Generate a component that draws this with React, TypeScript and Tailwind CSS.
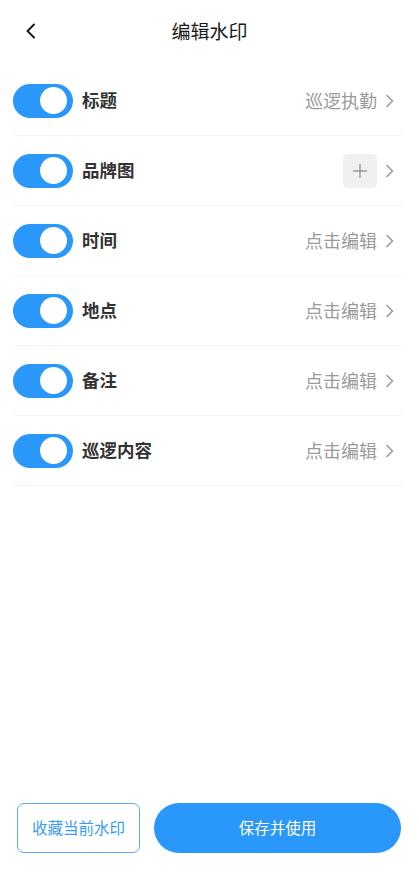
import React from "react";

const font = { fontFamily: '"Noto Sans CJK SC", "Noto Sans", sans-serif' };

function Toggle() {
  return (
    <div className="w-[60px] h-[34px] rounded-full bg-[#2a97fa] flex items-center justify-end pr-[6px] shrink-0">
      <div className="w-[27px] h-[27px] rounded-full bg-white" />
    </div>
  );
}

function Chevron() {
  return (
    <svg width="10" height="14" viewBox="0 0 10 14" className="shrink-0 ml-[8px]">
      <path d="M2 1.5 L7.5 7 L2 12.5" fill="none" stroke="#9a9a9a" strokeWidth="1.6" strokeLinecap="round" strokeLinejoin="round" />
    </svg>
  );
}

type Row = { label: string; value?: string; plus?: boolean };

const rows: Row[] = [
  { label: "标题", value: "巡逻执勤" },
  { label: "品牌图", plus: true },
  { label: "时间", value: "点击编辑" },
  { label: "地点", value: "点击编辑" },
  { label: "备注", value: "点击编辑" },
  { label: "巡逻内容", value: "点击编辑" },
];

export default function App() {
  return (
    <div className="h-screen w-full bg-white flex flex-col" style={font}>
      <div className="relative h-[62px] flex items-center justify-center">
        <svg width="12" height="16" viewBox="0 0 12 16" className="absolute left-[25px] top-[23px]">
          <path d="M9 1.5 L2.5 8 L9 14.5" fill="none" stroke="#1a1a1a" strokeWidth="2" strokeLinecap="round" strokeLinejoin="round" />
        </svg>
        <div className="text-[19px] text-[#1a1a1a] font-normal">编辑水印</div>
      </div>
      <div className="pt-[4px] flex-1">
        {rows.map((r) => (
          <div key={r.label} className="ml-[13px] mr-[16px] pr-[8px] h-[70px] flex items-center border-b border-[#f5f5f5]">
            <Toggle />
            <div className="ml-[9px] text-[17.5px] font-semibold text-[#333333] flex-1">{r.label}</div>
            {r.plus ? (
              <div className="w-[34px] h-[34px] rounded-[5px] bg-[#f0f0f0] flex items-center justify-center">
                <svg width="16" height="16" viewBox="0 0 16 16">
                  <path d="M8 1 V15 M1 8 H15" stroke="#9a9a9a" strokeWidth="1.4" />
                </svg>
              </div>
            ) : (
              <div className="text-[18px] text-[#9a9a9a]">{r.value}</div>
            )}
            <Chevron />
          </div>
        ))}
      </div>
      <div className="flex gap-[14px] px-[17px] pb-[33px] pr-[18px]">
        <button className="w-[123px] h-[50px] rounded-[7px] border border-[#5aaaf5] text-[#3a9cf5] text-[15.5px] flex items-center justify-center bg-white">
          收藏当前水印
        </button>
        <button className="flex-1 h-[50px] rounded-full bg-[#2a97fa] text-white text-[15.5px] flex items-center justify-center">
          保存并使用
        </button>
      </div>
    </div>
  );
}
